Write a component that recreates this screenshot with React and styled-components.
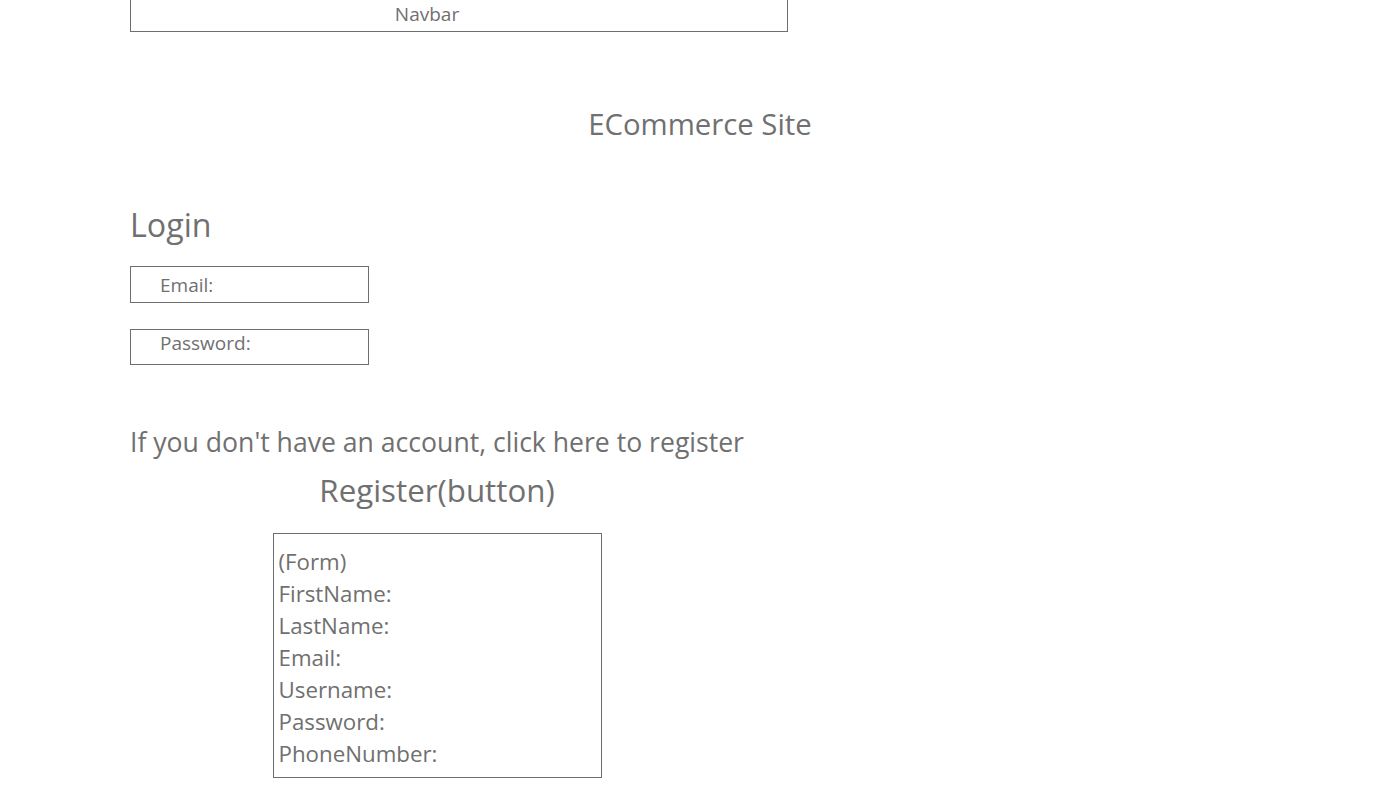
import React from 'react';
import styled, { createGlobalStyle } from 'styled-components';

const GlobalStyle = createGlobalStyle`
  html, body {
    margin: 0;
    padding: 0;
    background: #fff;
  }
  body {
    font-family: 'Open Sans', 'Noto Sans', sans-serif;
    color: #707070;
  }
`;

const Page = styled.div`
  width: 1400px;
  height: 800px;
  padding: 0 130px;
  box-sizing: border-box;
  overflow: hidden;
`;

const Navbar = styled.nav`
  width: 658px;
  height: 32px;
  box-sizing: border-box;
  border: 1px solid #6e6e6e;
  border-top: none;
  display: flex;
  align-items: center;
  justify-content: center;
  padding: 0 64px 4px 0;
  font-size: 19px;
`;

const Title = styled.h1`
  margin: 70px 0 0;
  text-align: center;
  font-size: 29.3px;
  font-weight: 400;
  line-height: 44px;
`;

const Heading = styled.h2`
  margin: 57px 0 0;
  font-size: 32.2px;
  font-weight: 400;
  line-height: 44px;
`;

const LoginForm = styled.div`
  display: flex;
  flex-direction: column;
  gap: 26px;
  margin-top: 19px;
`;

const Field = styled.div`
  width: 239px;
  height: ${(p) => p.$h}px;
  box-sizing: border-box;
  border: 1px solid #6e6e6e;
  padding-left: 29px;
  display: flex;
  align-items: ${(p) => (p.$top ? 'flex-start' : 'center')};
  font-size: 19px;
  line-height: 26px;
`;

const RegisterBlock = styled.div`
  width: fit-content;
  margin-top: 58px;
  display: flex;
  flex-direction: column;
  align-items: center;
`;

const Hint = styled.p`
  margin: 0;
  font-size: 26.6px;
  line-height: 38px;
  align-self: flex-start;
`;

const RegisterButton = styled.div`
  font-size: 31.3px;
  line-height: 44px;
  margin-top: 7px;
`;

const RegisterForm = styled.div`
  width: 329px;
  height: 245px;
  box-sizing: border-box;
  margin-top: 21px;
  border: 1px solid #6e6e6e;
  padding: 12px 5px;
  display: flex;
  flex-direction: column;
  font-size: 22.3px;
  line-height: 32px;
`;

const registerFields = [
  '(Form)',
  'FirstName:',
  'LastName:',
  'Email:',
  'Username:',
  'Password:',
  'PhoneNumber:',
];

export default function App() {
  return (
    <>
      <GlobalStyle />
      <Page>
        <Navbar>Navbar</Navbar>
        <Title>ECommerce Site</Title>
        <Heading>Login</Heading>
        <LoginForm>
          <Field $h={37}>Email:</Field>
          <Field $h={36} $top>Password:</Field>
        </LoginForm>
        <RegisterBlock>
          <Hint>If you don't have an account, click here to register</Hint>
          <RegisterButton>Register(button)</RegisterButton>
          <RegisterForm>
            {registerFields.map((f) => (
              <span key={f}>{f}</span>
            ))}
          </RegisterForm>
        </RegisterBlock>
      </Page>
    </>
  );
}
